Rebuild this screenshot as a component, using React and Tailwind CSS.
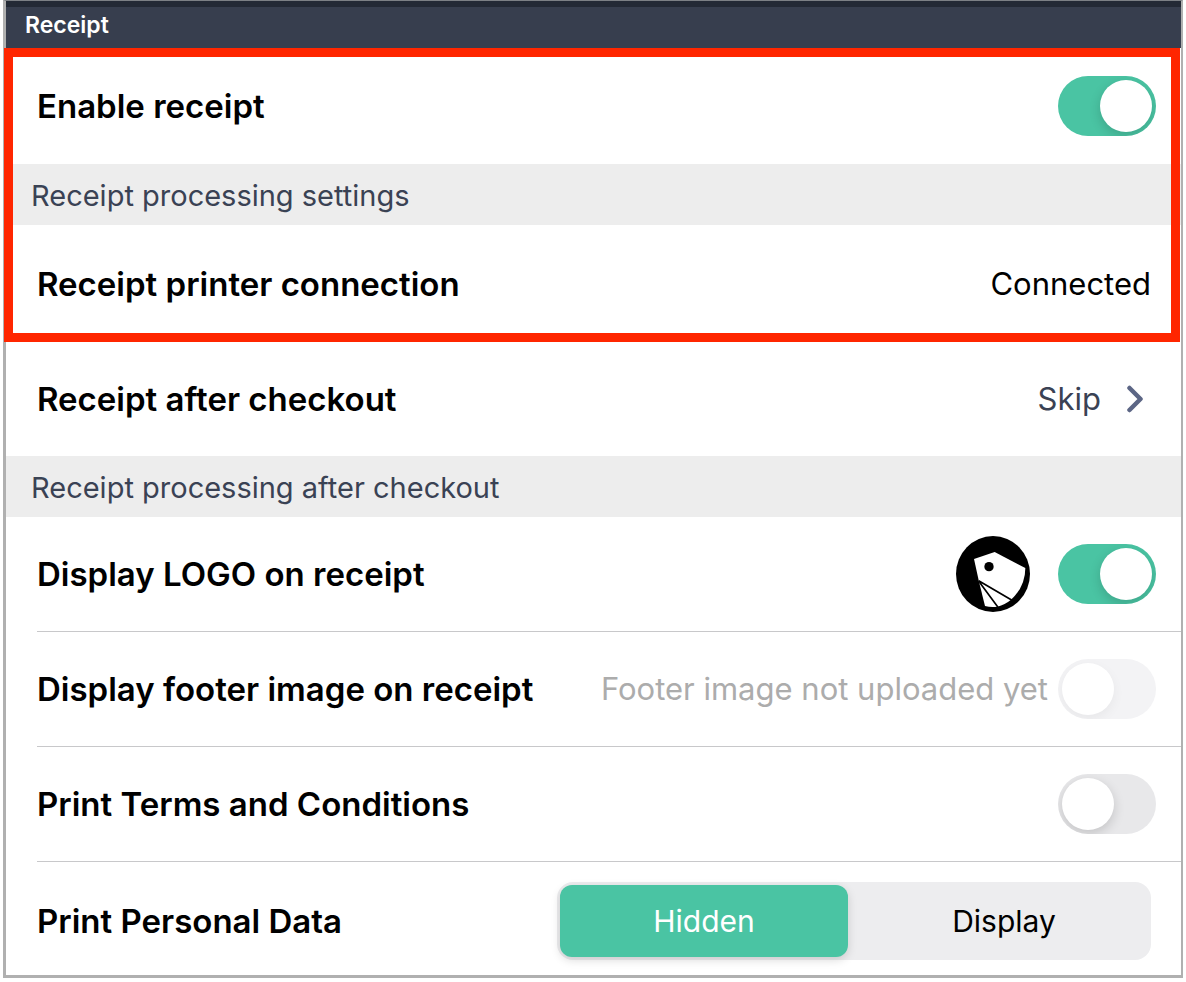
import React, { useState } from 'react'

const Toggle = ({ id, defaultChecked = false, disabled = false }) => (
  <input
    id={id}
    type="checkbox"
    role="switch"
    defaultChecked={defaultChecked}
    disabled={disabled}
    className="h-[60px] w-[98px] shrink-0 cursor-pointer appearance-none rounded-full bg-[#e8e8ea] p-1 before:block before:size-[52px] before:rounded-full before:bg-white before:shadow-[0_4px_12px_rgba(0,0,0,0.16)] checked:bg-[#4ac4a3] checked:before:ml-auto disabled:cursor-default disabled:bg-[#f3f3f5] disabled:before:shadow-[0_4px_12px_rgba(0,0,0,0.05)] overflow-hidden"
  />
)

const Row = ({ label, htmlFor, className = 'min-h-[115px]', children }) => (
  <div className={`flex items-center justify-between gap-4 pr-[25px] ${className}`}>
    {htmlFor ? (
      <label htmlFor={htmlFor} className="text-[33px] leading-10 font-semibold text-black">
        {label}
      </label>
    ) : (
      <span className="text-[33px] leading-10 font-semibold text-black">{label}</span>
    )}
    <div className="flex items-center">{children}</div>
  </div>
)

const SectionTitle = ({ children }) => (
  <h2 className="bg-[#ededed] pt-[11px] pb-[9px] pl-[25px] text-[29px] leading-[41px] text-[#3a4254]">
    {children}
  </h2>
)

const BrandLogo = () => (
  <svg viewBox="0 0 222 228" className="h-[76px] w-[74px]" role="img" aria-label="Store logo">
    <ellipse cx="111" cy="114" rx="111" ry="114" fill="#000" />
    <path d="M54 69 L116 48 L208 96 Q208 152 165 191 Q147 206 124 212 Q105 215 87 210 L69 137 Z" fill="#fff" />
    <circle cx="99" cy="92" r="14" fill="#000" />
    <path d="M68 134 L168 193 M70 138 L126 214" stroke="#000" strokeWidth="5" fill="none" />
  </svg>
)

const ChevronIcon = () => (
  <svg viewBox="0 0 16 28" className="h-7 w-4" fill="none" aria-hidden="true">
    <path d="M2.5 3 L13.5 14 L2.5 25" stroke="#5c6685" strokeWidth="4.5" strokeLinecap="round" strokeLinejoin="round" />
  </svg>
)

const personalDataOptions = ['Hidden', 'Display']

const App = () => {
  const [personalData, setPersonalData] = useState('Hidden')

  return (
    <div className="bg-white px-[3px] font-['Inter',sans-serif]">
      <main className="border-t border-r-2 border-b-3 border-l-3 border-[#b0b0b0] border-t-[#7c8085] bg-white">
        <header className="border-t-6 border-[#232935] bg-[#373e4e] pb-[5px] pl-[19px]">
          <h1 className="text-[23px] leading-9 font-semibold text-white">Receipt</h1>
        </header>

        {/* Highlighted settings */}
        <section className="relative">
          <div className="pl-[31px]">
            <Row label="Enable receipt" htmlFor="enable-receipt" className="min-h-[116px]">
              <Toggle id="enable-receipt" defaultChecked />
            </Row>
          </div>
          <SectionTitle>Receipt processing settings</SectionTitle>
          <div className="pl-[31px]">
            <Row label="Receipt printer connection" className="min-h-[117px]">
              <span className="pr-[5px] text-[31px] leading-10 text-black">Connected</span>
            </Row>
          </div>
          <div className="pointer-events-none absolute inset-y-0 right-px -left-0.5 border-9 border-[#ff2600]" />
        </section>

        <div className="pl-[31px]">
          <Row label="Receipt after checkout" className="min-h-[114px]">
            <button type="button" className="flex cursor-pointer items-center gap-[26px] pr-[13px] text-[31px] leading-10 text-[#3a4254]">
              Skip
              <ChevronIcon />
            </button>
          </Row>
        </div>

        <SectionTitle>Receipt processing after checkout</SectionTitle>
        <div className="divide-y divide-[#c8c8ca] pl-[31px]">
          <Row label="Display LOGO on receipt" htmlFor="display-logo">
            <div className="flex items-center gap-7">
              <BrandLogo />
              <Toggle id="display-logo" defaultChecked />
            </div>
          </Row>
          <Row label="Display footer image on receipt" htmlFor="display-footer">
            <div className="flex items-center gap-[10px]">
              <span className="text-[31px] leading-10 text-[#acacac]">Footer image not uploaded yet</span>
              <Toggle id="display-footer" disabled />
            </div>
          </Row>
          <Row label="Print Terms and Conditions" htmlFor="print-terms">
            <Toggle id="print-terms" />
          </Row>
          <Row label="Print Personal Data" className="pt-5 pb-[15px]">
            <div
              role="radiogroup"
              aria-label="Print Personal Data"
              className="mr-[5px] grid w-[594px] grid-cols-2 gap-3 rounded-2xl bg-[#ededef] p-[3px]"
            >
              {personalDataOptions.map((option) => (
                <label
                  key={option}
                  className="relative flex h-[72px] cursor-pointer items-center justify-center rounded-xl text-[30px] leading-10 text-black has-checked:bg-[#4ac4a3] has-checked:text-white has-checked:shadow-[0_3px_10px_rgba(0,0,0,0.15)]"
                >
                  <input
                    type="radio"
                    name="personal-data"
                    value={option}
                    checked={personalData === option}
                    onChange={() => setPersonalData(option)}
                    className="absolute inset-0 cursor-pointer appearance-none rounded-xl"
                  />
                  {option}
                </label>
              ))}
            </div>
          </Row>
        </div>
      </main>
    </div>
  )
}

export default App
